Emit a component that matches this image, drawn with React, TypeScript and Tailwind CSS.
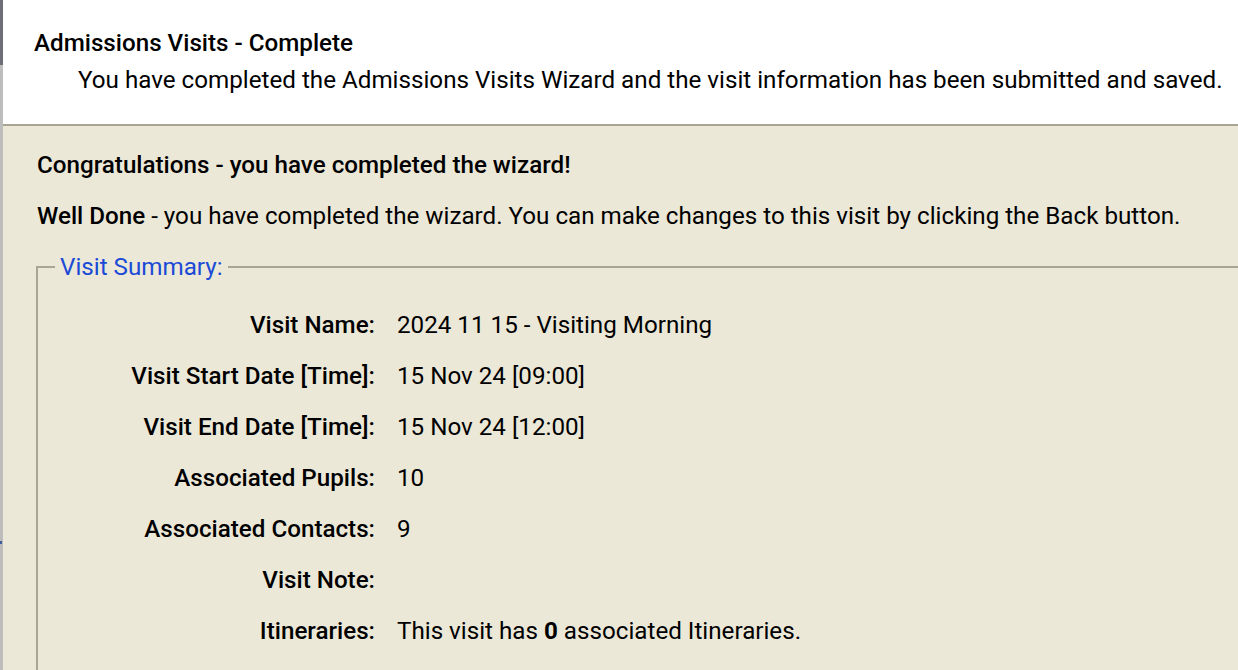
export default function App() {
  const rows: { label: string; value: React.ReactNode }[] = [
    { label: "Visit Name:", value: "2024 11 15 - Visiting Morning" },
    { label: "Visit Start Date [Time]:", value: "15 Nov 24 [09:00]" },
    { label: "Visit End Date [Time]:", value: "15 Nov 24 [12:00]" },
    { label: "Associated Pupils:", value: "10" },
    { label: "Associated Contacts:", value: "9" },
    { label: "Visit Note:", value: "" },
    {
      label: "Itineraries:",
      value: (
        <>
          This visit has <span className="font-bold">0</span> associated Itineraries.
        </>
      ),
    },
  ];

  return (
    <div
      className="flex h-screen overflow-hidden text-[24.2px] text-black"
      style={{ fontFamily: "Roboto, 'Liberation Sans', sans-serif" }}
    >
      {/* LEFT EDGE STRIP */}
      <div className="relative flex w-[3px] shrink-0 flex-col">
        <div className="h-[65px] bg-[#6e6e78]" />
        <div className="flex-1 bg-[#bdbdbd]" />
        <div className="absolute left-0 top-[541px] h-[3px] w-[2px] bg-[#3f5c9c]" />
      </div>

      <div className="flex min-w-0 flex-1 flex-col">
        {/* HEADER */}
        <div className="h-[126px] shrink-0 border-b-2 border-[#a8a494] bg-white pt-[29px]">
          <div className="ml-[31px] font-medium leading-[28px]">Admissions Visits - Complete</div>
          <div className="ml-[75px] mt-[9px] leading-[28px]">
            You have completed the Admissions Visits Wizard and the visit information has been submitted and saved.
          </div>
        </div>

        {/* BODY */}
        <div className="flex-1 bg-[#ece8d8] pl-[34px] pt-[25px]">
          <div className="font-medium leading-[28px]">Congratulations - you have completed the wizard!</div>
          <div className="mt-[23px] leading-[28px]">
            <span className="font-medium">Well Done</span> - you have completed the wizard. You can make changes to
            this visit by clicking the Back button.
          </div>

          <fieldset className="-ml-[1px] mt-[23px] min-h-[500px] border-2 border-r-0 border-[#a9a594] pl-[17px]">
            <legend className="px-[5px] leading-[28px] text-[#1a4ad6]">Visit Summary:</legend>
            <div className="grid grid-cols-[320px_1fr] gap-x-[22px] pt-[19px]">
              {rows.map((r) => (
                <div key={r.label} className="contents">
                  <div className="h-[51px] text-right font-medium leading-[51px]">{r.label}</div>
                  <div className="h-[51px] leading-[51px]">{r.value}</div>
                </div>
              ))}
            </div>
          </fieldset>
        </div>
      </div>
    </div>
  );
}
